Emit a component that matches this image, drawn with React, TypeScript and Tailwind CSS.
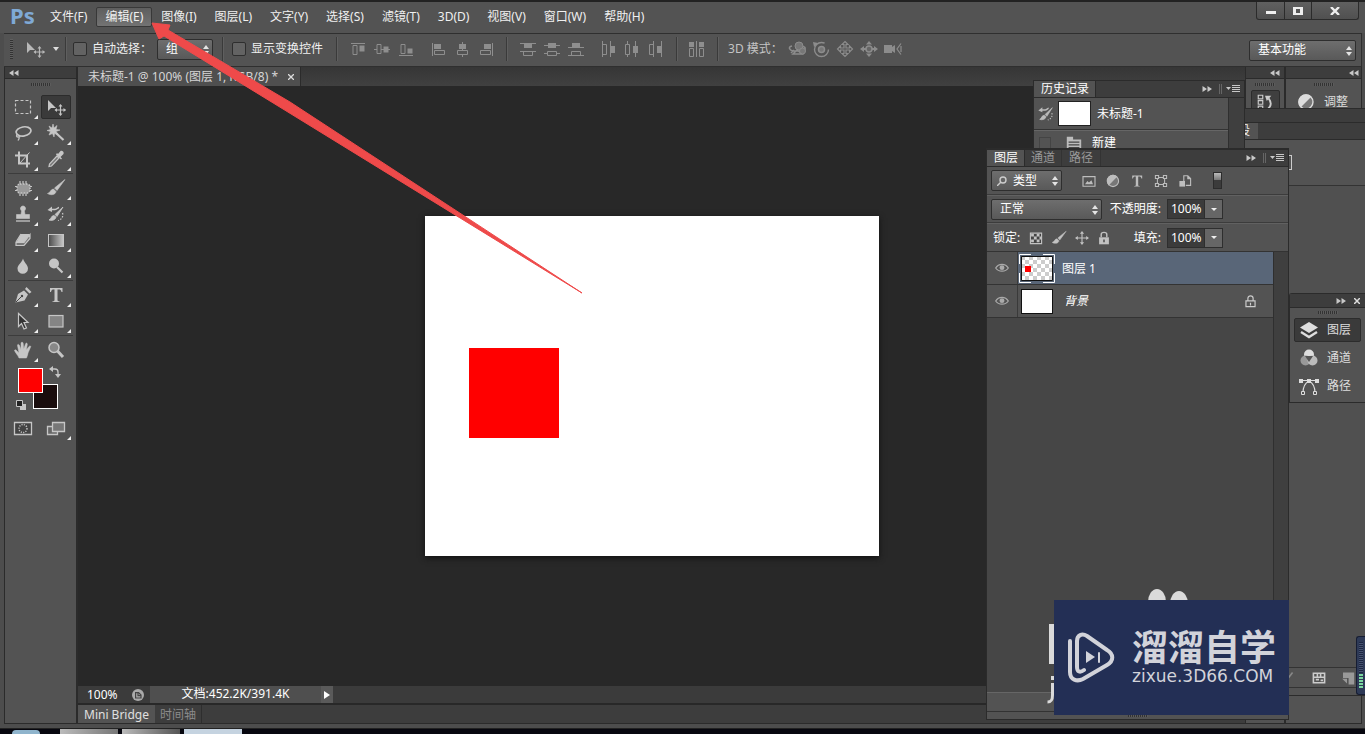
import type { ReactNode } from 'react';

const menus = [
  '文件(F)', '编辑(E)', '图像(I)', '图层(L)', '文字(Y)', '选择(S)',
  '滤镜(T)', '3D(D)', '视图(V)', '窗口(W)', '帮助(H)',
];

interface IconProps {
  children: ReactNode;
  className?: string;
}

// 20x20 grid, everything takes the text colour
function Icon({ children, className = 'w-5 h-5' }: IconProps) {
  return (
    <svg viewBox="0 0 20 20" className={`shrink-0 ${className}`} fill="none" stroke="currentColor" strokeWidth={1}>
      {children}
    </svg>
  );
}

const moveArrow = (
  <>
    <path d="M2 3v11l3-3h5z" fill="currentColor" stroke="none" />
    <path d="M14.5 8v10M9.5 13h10" strokeWidth={1.2} />
    <path d="M14.5 7l-2 2.5h4zM14.5 19l-2-2.5h4zM8.5 13l2.5-2v4zM20 13l-2.5-2v4z" fill="currentColor" stroke="none" />
  </>
);

const tools: Record<string, ReactNode> = {
  marquee: <rect x="2.5" y="3.500" width="15" height="13" strokeDasharray="3 2" strokeWidth={1.2} />,
  move: moveArrow,
  lasso: (
    <>
      <ellipse cx="10.5" cy="8.5" rx="7.5" ry="4.5" strokeWidth={1.7} transform="rotate(-10 10 8)" />
      <path d="M5 11c-2 1-2 3 0 3s1 2 0 3.500M5.500 12c2 1 2 2 0 2" strokeWidth={1.3} />
    </>
  ),
  wand: (
    <>
      <path d="M7 1l1 4 3-2.500-1 4 4 .5-4 1.500 2 3-3.500-1L8 14l-1.500-3.500L3 12l1.500-3.500L1 7.500l3.500-1L3 3l3 2z" fill="currentColor" strokeWidth={.6} />
      <path d="M10 10l7.500 7" strokeWidth={2.2} />
    </>
  ),
  crop: (
    <>
      <path d="M6 2.500v12h11M2 6.500h12v12" strokeWidth={2} />
      <path d="M7 14l9.500-10.500" />
    </>
  ),
  dropper: (
    <>
      <path d="M11 7l-7.500 8L3 17.500l2.500-.5L13 9z" fill="#777" strokeWidth={1.2} />
      <path d="M10 5.500l5 5 1-1-1.500-1.500 3-3c1-2-1.500-4-3-3l-2.500 3-1-1z" fill="currentColor" stroke="none" />
    </>
  ),
  patch: (
    <>
      <rect x="4" y="6" width="13" height="9" rx="3" fill="#999" stroke="none" />
      <rect x="4" y="6" width="13" height="9" rx="3" strokeDasharray="1.500 1.500" strokeWidth={1.5} />
      <path d="M7 3v3M10 3v3M13 3v3M7 15v3M10 15v3M13 15v3M2 8.500h2M2 12.500h2M17 8.500h2M17 12.500h2" strokeWidth={1.2} />
    </>
  ),
  brush: (
    <>
      <path d="M19 1.500L8.500 10l2.500 2.500z" fill="currentColor" strokeWidth={.6} />
      <path d="M7.500 11c-3 0-3 4-6 4.500 3 2 8 1.500 8.500-2z" fill="currentColor" strokeWidth={.6} />
    </>
  ),
  stamp: (
    <>
      <path d="M10 2a2.500 2.500 0 0 0-2.500 3c.5 1 1 1.500 1 2.500L8 10.500H3.500v4h13v-4H12l-.5-3c0-1 .5-1.500 1-2.500A2.500 2.500 0 0 0 10 2z" fill="currentColor" strokeWidth={.6} />
      <path d="M3 17h14" strokeWidth={1.3} />
    </>
  ),
  history: (
    <>
      <path d="M17 3L9 10.500l2 2zM8 11.500c-3 0-2.500 3.500-5 4.500 3 1 6.500 0 7-3z" fill="currentColor" strokeWidth={.8} />
      <path d="M4 5.500h5c2 0 3-2 4-2" strokeWidth={1.6} />
      <path d="M1.500 6L6 2.500V8z" fill="currentColor" stroke="none" />
      <path d="M16.500 9c1 4-1 6.500-4.500 7.500" strokeDasharray="1.500 1.500" strokeWidth={1.3} />
    </>
  ),
  eraser: (
    <>
      <path d="M8 4h9l-5 9H3z" fill="currentColor" stroke="none" />
      <path d="M3 12l5-8M3 12.500h8l6-8v4l-6 7H3z" fill="#777" strokeWidth={1.2} />
    </>
  ),
  gradient: (
    <>
      <defs>
        <linearGradient id="ramp"><stop stopColor="#4a4a4a" /><stop offset="1" stopColor="#c8c8c8" /></linearGradient>
      </defs>
      <rect x="2.500" y="4.500" width="15" height="12" fill="url(#ramp)" />
    </>
  ),
  blur: <path d="M10 2.500c1 4 5 6.500 5 10a5 5 0 0 1-10.500 0c0-3.500 4.500-6 5.500-10z" fill="currentColor" stroke="none" />,
  dodge: (
    <>
      <circle cx="8" cy="7.500" r="5" fill="currentColor" stroke="none" />
      <path d="M11 11l5.500 5.500" strokeWidth={2.2} />
    </>
  ),
  pen: (
    <>
      <path d="M2.500 17.500L5 9l6-3.500 4 4-3.500 6z" fill="currentColor" stroke="none" />
      <path d="M12 4l1.500-2 5 5-2 1.500z" fill="currentColor" stroke="none" />
      <path d="M3 17l5.500-5.500" stroke="#444" />
      <circle cx="9" cy="11" r="1.200" fill="#444" stroke="none" />
    </>
  ),
  type: <path d="M4 3h12.500v4h-1c-.5-2-1-2.500-3-2.500h-1V15c0 1 .5 1.200 2 1.300V17h-7v-.7c1.500-.1 2-.3 2-1.300V4.500H8C6 4.500 5.500 5 5 7H4z" fill="currentColor" stroke="none" />,
  select: <path d="M5.500 2.500v13l3-3 2.500 5.500 2.500-1L11 11.500h4z" fill="#333" strokeWidth={1.2} />,
  shape: <rect x="3" y="4.500" width="14" height="11.500" fill="#858585" strokeWidth={1.2} />,
  hand: <path d="M6 18C5 15 2 12.500 1.500 10.500c0-1 1.500-1 2.500.5l2 2L4.500 5.500C4.300 4 6 4 6.500 5.500L8 9.500 8 3.500c0-1.800 2-1.800 2.200 0l.5 5.500L12.500 4c.5-1.500 2-1 1.800.5l-1 5.500 2.700-3.500c1-1.200 2.200-.5 1.500.8L15 13c0 2-1 3-1.500 5z" fill="currentColor" strokeWidth={.5} />,
  zoom: (
    <>
      <circle cx="8" cy="7.500" r="5" fill="#888" strokeWidth={1.5} />
      <path d="M11.500 11l5.500 6" strokeWidth={3} />
    </>
  ),
};

const toolGroups = [
  [['marquee', 'move'], ['lasso', 'wand'], ['crop', 'dropper']],
  [['patch', 'brush'], ['stamp', 'history'], ['eraser', 'gradient'], ['blur', 'dodge']],
  [['pen', 'type'], ['select', 'shape']],
  [['hand', 'zoom']],
];

// align left/right and top/bottom, then the distribute sets
const alignSets = [
  [
    <><path d="M3 4.500h14" /><path d="M5 6.500h4v9H5z" /><path d="M11.500 6.500h5v6h-5z" fill="currentColor" stroke="none" /></>,
    <><path d="M2 10.500h3M9 10.500h9" /><path d="M5 5.500h4v9H5z" /><path d="M11.500 7.500h5v6h-5z" fill="currentColor" stroke="none" /></>,
    <><path d="M3 16.500h14" /><path d="M5 5.500h4v9H5z" /><path d="M11.500 9.500h5v5h-5z" fill="currentColor" stroke="none" /></>,
  ],
  [
    <><path d="M4.500 4v13" /><path d="M6.500 11.500h10v4h-10z" /><path d="M6 5h7v5H6z" fill="currentColor" stroke="none" /></>,
    <><path d="M10.500 3v8M10.500 16v2" /><path d="M5.500 11.500h10v4h-10z" /><path d="M7 5h7v5H7z" fill="currentColor" stroke="none" /></>,
    <><path d="M16.500 4v13" /><path d="M4.500 11.500h10v4h-10z" /><path d="M8 5h7v5H8z" fill="currentColor" stroke="none" /></>,
  ],
  [
    <><path d="M2 4.500h16M2 12.500h16M5.500 12.500v4h9v-4" /><path d="M6 5h8v4H6z" fill="currentColor" stroke="none" /></>,
    <><path d="M2 6.500h16M2 14.500h4M14 14.500h4M5.500 12.500h9v4h-9z" /><path d="M6 4h8v5H6z" fill="currentColor" stroke="none" /></>,
    <><path d="M2 8.500h16M2 16.500h16M5.500 16.500v-4h9v4" /><path d="M6 4h8v5H6z" fill="currentColor" stroke="none" /></>,
  ],
  [
    <><path d="M4.500 2v16M12.500 2v16M4.500 5.500h4v10h-4" /><path d="M13 7h4v7h-4z" fill="currentColor" stroke="none" /></>,
    <><path d="M5.500 2v3M5.500 15v3M13.500 2v16M3.500 5.500h4v10h-4z" /><path d="M11 7h5v7h-5z" fill="currentColor" stroke="none" /></>,
    <><path d="M7.500 2v16M15.500 2v16M7.500 5.500h-4v10h4" /><path d="M11 7h4v7h-4z" fill="currentColor" stroke="none" /></>,
  ],
];

const modes3d = [
  <><circle cx="12" cy="7" r="4" fill="#777" /><path d="M5 7c-4 1-3 4 1 5h9c4 0 4-4 1-4.500M4 14l3-3M6 15h9l-5-4z" strokeWidth={1.5} /><circle cx="15.500" cy="12" r="3" fill="#777" /></>,
  <><circle cx="10.500" cy="10.500" r="7" strokeWidth={1.4} strokeDasharray="36 8" /><circle cx="10.500" cy="10.500" r="3" fill="#777" strokeWidth={1.5} /><path d="M2 3l5 1-4 4z" fill="currentColor" stroke="none" /></>,
  <path d="M10 2.500l3 3h-2v3.500h3.500V7l3 3-3 3v-2H11v3.500h2l-3 3-3-3h2V11H5.500v2l-3-3 3-3v2H9V5.500H7z" strokeWidth={1.2} />,
  <><circle cx="10" cy="10" r="3" fill="#666" strokeWidth={1.5} /><path d="M10 2l3 3.500H7zM10 18l3-3.500H7zM1 10l4-3v2h2v2H5v2zM19 10l-4-3v2h-2v2h2v2z" fill="currentColor" stroke="none" /></>,
  <><path d="M1 6h8v2l3-2v8l-3-2v2H1z" fill="currentColor" stroke="none" /><path d="M18 4.500L14 10l4 5.500M18 7v6" strokeWidth={1.2} /></>,
];

const filterIcons = [
  { label: '像素图层', art: <><path d="M2.500 4.500h15v12h-15z" strokeWidth={1.4} /><path d="M5 14l3-4 2 2 3-3 2 5z" fill="currentColor" stroke="none" /></> },
  { label: '调整图层', art: <><circle cx="10" cy="10" r="7" fill="#777" strokeWidth={1.4} /><path d="M15.500 4.500A7.700 7.700 0 1 0 4.500 15.500z" fill="currentColor" stroke="none" /></> },
  { label: '文字图层', art: tools.type },
  { label: '形状图层', art: <><path d="M5.500 5.500h9v9h-9z" strokeWidth={1.3} /><path d="M3 3h4v4H3zM13 3h4v4h-4zM3 13h4v4H3zM13 13h4v4h-4z" fill="#535353" strokeWidth={1.3} /></> },
  { label: '智能对象', art: <><path d="M8.500 10V3.500h5l3.500 3.500v8.500h-6M13.500 3.500V7H17" strokeWidth={1.4} /><path d="M3 10h7v7H3z" fill="currentColor" stroke="none" /></> },
];

function Grip({ className = '' }: { className?: string }) {
  return (
    <div className={`h-[3px] w-5 shrink-0 bg-[repeating-linear-gradient(90deg,#333_0_1px,#5c5c5c_1px_2px)] ${className}`} />
  );
}

function Chevrons({ left }: { left?: boolean }) {
  return (
    <svg viewBox="0 0 10 6" className="w-[10px] h-[6px]" fill="#c8c8c8">
      {left ? <path d="M4.500 0v6L0 3zM9.500 0v6L5 3z" /> : <path d="M.5 0v6L5 3zM5.500 0v6L10 3z" />}
    </svg>
  );
}

function PanelControls() {
  return (
    <div className="ml-auto mr-1 flex items-center gap-1">
      <Chevrons />
      <span className="ml-[3px] h-[10px] w-[3px] border-x border-[#666]" />
      <svg viewBox="0 0 14 8" className="w-[14px] h-[8px]" stroke="#c8c8c8">
        <path d="M0 2h5L2.500 5z" fill="#c8c8c8" stroke="none" />
        <path d="M6 .5h8M6 2.500h8M6 4.500h8M6 6.500h8" />
      </svg>
    </div>
  );
}

function Divider() {
  return <div className="h-6 w-[2px] shrink-0 border-l border-[#3a3a3a] bg-[#5f5f5f]" />;
}

function Picker({ label, value, className, inset = 'pl-2' }: { label: string; value: string; className: string; inset?: string }) {
  return (
    <div className={`relative shrink-0 ${className}`}>
      <select aria-label={label} className={`block h-[21px] w-full appearance-none rounded-[2px] border border-[#2e2e2e] bg-linear-to-b from-[#6e6e6e] to-[#595959] text-xs leading-[18px] text-white ${inset}`}>
        <option>{value}</option>
      </select>
      <svg viewBox="0 0 6 10" className="pointer-events-none absolute right-1 top-[6px] h-[10px] w-[6px]" fill="#e4e4e4">
        <path d="M3 0l3 4H0zM3 10l3-4H0z" />
      </svg>
    </div>
  );
}

function Percent({ id, label }: { id: string; label: string }) {
  return (
    <>
      <label htmlFor={id} className="ml-auto">{label}</label>
      <div className="ml-[6px] flex h-[20px] w-[56px] border border-[#2e2e2e]">
        <input id={id} defaultValue="100%" className="w-[36px] bg-[#3b3b3b] pl-[3px] text-xs text-white" />
        <button aria-label={`${label}菜单`} className="flex flex-1 items-center justify-center border-l border-[#2e2e2e] bg-[#666]">
          <svg viewBox="0 0 6 3" className="h-[3px] w-[6px]" fill="#eee"><path d="M0 0h6L3 3z" /></svg>
        </button>
      </div>
    </>
  );
}

function Check({ label }: { label: string }) {
  return (
    <label className="flex shrink-0 items-center gap-[5px]">
      <input type="checkbox" className="h-[14px] w-[14px] appearance-none rounded-[2px] border border-[#2e2e2e] bg-[#636363]" />
      {label}
    </label>
  );
}

function MenuBar() {
  return (
    <header className="flex h-[33px] shrink-0 items-start border-t-2 border-[#222] bg-[#535353]">
      <div className="w-[41px] shrink-0 pl-[10px] text-[22px] font-bold leading-[26px] text-[#7fa9d6]">Ps</div>
      <nav className="flex pt-[5px]">
        {menus.map((m, i) => (
          <button
            key={m}
            className={`h-[20px] whitespace-nowrap rounded-[2px] border px-2 leading-[18px] ${i === 1 ? 'border-[#383838] bg-linear-to-b from-[#5e5e5e] to-[#737373]' : 'border-transparent'}`}
          >
            {m}
          </button>
        ))}
      </nav>
      <div className="ml-auto mr-[6px] flex h-[18px] rounded-b-[3px] border border-t-0 border-[#2b2b2b] bg-linear-to-b from-[#606060] to-[#505050]">
        <button aria-label="最小化" className="flex w-[28px] items-end justify-center border-r border-[#2b2b2b] pb-[5px]">
          <span className="h-[3px] w-[10px] bg-[#eee]" />
        </button>
        <button aria-label="最大化" className="flex w-[27px] items-center justify-center border-r border-[#2b2b2b]">
          <span className="h-2 w-[10px] border-2 border-x-[3px] border-[#eee]" />
        </button>
        <button aria-label="关闭" className="flex w-[46px] items-center justify-center">
          <svg viewBox="0 0 10 8" className="h-2 w-[10px]" stroke="#eee" strokeWidth={2.4}><path d="M1 0l8 8M9 0L1 8" /></svg>
        </button>
      </div>
    </header>
  );
}

function OptionsBar() {
  return (
    <div className="ml-1 mr-[3px] flex h-[34px] shrink-0 items-center border-y border-r border-[#2f2f2f] bg-[#535353] pb-[2px]">
      <div className="ml-[6px] h-5 w-[3px] bg-[repeating-linear-gradient(0deg,#333_0_1px,#606060_1px_2px)]" />
      <button aria-label="移动工具" className="ml-3 flex items-center gap-2 text-[#b8b8b8]">
        <Icon className="w-5 h-5">{moveArrow}</Icon>
        <svg viewBox="0 0 6 4" className="h-1 w-[6px]" fill="#ddd"><path d="M0 0h6L3 4z" /></svg>
      </button>
      <div className="mx-[6px]"><Divider /></div>
      <Check label="自动选择：" />
      <Picker label="自动选择" value="组" className="ml-[5px] w-[56px]" />
      <div className="ml-[9px] mr-2"><Divider /></div>
      <Check label="显示变换控件" />
      <div className="ml-[13px] mr-2"><Divider /></div>
      <div className="flex items-center gap-2 text-[#8e8e8e]">
        {alignSets.map((set, i) => (
          <div key={i} className="flex items-center">
            {set.map((art, j) => (
              <button key={j} aria-label={`对齐 ${i * 3 + j + 1}`} className="flex w-6 justify-center"><Icon>{art}</Icon></button>
            ))}
            {i === 1 && <div className="ml-2"><Divider /></div>}
          </div>
        ))}
      </div>
      <div className="mx-2"><Divider /></div>
      <button aria-label="自动对齐图层" className="text-[#8e8e8e]">
        <Icon>
          <path d="M3 3h5v5H3zM13 3h5v5h-5z" fill="currentColor" stroke="none" />
          <path d="M3.500 9.500h4v8h-4zM13.500 9.500h4v8h-4zM10.500 2v16" />
        </Icon>
      </button>
      <div className="ml-[11px] mr-[9px]"><Divider /></div>
      <span className="whitespace-nowrap text-[#c4c4c4]">3D 模式：</span>
      <div className="ml-1 flex gap-1 text-[#8c8c8c]">
        {modes3d.map((art, i) => (
          <button key={i} aria-label={`3D 模式 ${i + 1}`}><Icon>{art}</Icon></button>
        ))}
      </div>
      <Picker label="工作区" value="基本功能" className="ml-auto mr-[5px] mt-[2px] w-[107px]" />
    </div>
  );
}

function Toolbox() {
  return (
    <aside className="flex w-[74px] shrink-0 flex-col border-x border-[#2b2b2b] border-r-2 bg-[#535353] text-[#c6c6c6]">
      <div className="flex h-3 shrink-0 items-center border-b border-[#2b2b2b] bg-[#3d3d3d] pl-1"><Chevrons left /></div>
      <Grip className="mx-auto mt-1 mb-[7px]" />
      {toolGroups.map((rows, i) => (
        <div key={i} className={`mx-[3px] ${i ? 'mt-[2px] border-t border-[#3c3c3c]' : ''}`}>
          {rows.map((row) => (
            <div key={row[0]} className="flex h-[26px] items-end gap-[3px]">
              {row.map((name) => (
                <button
                  key={name}
                  aria-label={name}
                  className={`relative flex h-6 w-[30px] items-center justify-center ${name === 'move' ? 'rounded-[2px] border border-[#2c2c2c] bg-[#3a3a3a]' : ''}`}
                >
                  <Icon>{tools[name]}</Icon>
                  {name !== 'move' && name !== 'zoom' && (
                    <svg viewBox="0 0 4 4" className="absolute bottom-0 right-0 h-1 w-1" fill="#eee"><path d="M4 0v4H0z" /></svg>
                  )}
                </button>
              ))}
            </div>
          ))}
        </div>
      ))}
      <div className="relative ml-[13px] mt-[6px] h-12 w-12">
        <button aria-label="背景色" className="absolute left-[15px] top-[16px] h-[25px] w-[25px] border border-white bg-[#1a0d0d]" />
        <button aria-label="前景色" className="absolute left-0 top-0 h-[25px] w-[25px] border border-white bg-[#ff0000]" />
        <svg viewBox="0 0 12 12" className="absolute left-[31px] top-[-2px] h-3 w-3" fill="none" stroke="currentColor" strokeWidth={1.3}>
          <path d="M3 3h3c2 0 3 1 3 3v3" /><path d="M4 0v6L0 3zM6 8h6l-3 4z" fill="currentColor" stroke="none" />
        </svg>
        <svg viewBox="0 0 10 10" className="absolute left-[-2px] top-[32px] h-[10px] w-[10px]">
          <path d="M4 4h6v6H4z" fill="#c6c6c6" /><path d="M.5.5h6v6h-6z" fill="#222" stroke="#c6c6c6" />
        </svg>
      </div>
      <div className="mx-[3px] flex h-6 items-center gap-[3px]">
        <button aria-label="快速蒙版" className="flex w-[30px] justify-center">
          <Icon><path d="M1.500 4.500h17v12h-17z" fill="#444" strokeWidth={1.3} /><circle cx="10" cy="10.500" r="4" strokeDasharray="1.200 1.200" strokeWidth={1.4} /></Icon>
        </button>
        <button aria-label="屏幕模式" className="relative flex w-[30px] justify-center">
          <Icon><path d="M1.500 8.500h10v8h-10z" fill="#666" strokeWidth={1.3} /><path d="M6.500 4.500h12v9h-12z" fill="#777" strokeWidth={1.3} /></Icon>
          <svg viewBox="0 0 4 4" className="absolute bottom-[-2px] right-0 h-1 w-1" fill="#eee"><path d="M4 0v4H0z" /></svg>
        </button>
      </div>
    </aside>
  );
}

function Document() {
  return (
    <main className="flex min-w-0 flex-1 flex-col bg-[#282828]">
      <div className="flex h-[19px] shrink-0 bg-linear-to-b from-[#363636] to-[#404040]">
        <div className="flex items-center gap-[10px] border-r border-[#2b2b2b] bg-[#4f4f4f] pl-[10px] pr-[6px] text-[#d6d6d6]">
          <span>未标题-1 @ 100% (图层 1, RGB/8) *</span>
          <button aria-label="关闭文档">
            <svg viewBox="0 0 6 6" className="h-[6px] w-[6px]" stroke="#ddd" strokeWidth={1.3}><path d="M0 0l6 6M6 0L0 6" /></svg>
          </button>
        </div>
      </div>
      <div className="flex flex-1 items-center justify-center pr-[20px]">
        <div className="h-[340px] w-[454px] bg-white shadow-[0_2px_6px_#111]">
          <div className="ml-11 mt-[132px] h-[90px] w-[90px] bg-[#ff0000]" />
        </div>
      </div>
      <div className="flex h-[17px] shrink-0 items-center bg-[#3b3b3b] text-white">
        <span className="w-12 pl-[9px]">100%</span>
        <div className="flex w-6 justify-center">
          <Icon className="w-3 h-3">
            <circle cx="10" cy="10" r="10" fill="#aaa" stroke="none" />
            <path d="M6 15V6h5l4 4v5z" stroke="#444" strokeWidth={2} /><path d="M10 5v6h5" stroke="#444" strokeWidth={2} />
          </Icon>
        </div>
        <span className="h-full w-[171px] bg-[#4f4f4f] text-center leading-4">文档:452.2K/391.4K</span>
        <button aria-label="状态菜单" className="flex h-full w-3 items-center justify-center bg-[#5a5a5a]">
          <svg viewBox="0 0 6 8" className="h-2 w-[6px]" fill="#fff"><path d="M0 0v8l6-4z" /></svg>
        </button>
      </div>
      <div className="mt-[2px] flex h-[18px] shrink-0 bg-[#3d3d3d] leading-[17px]">
        <button className="bg-[#535353] px-[6px] text-[#e0e0e0]">Mini Bridge</button>
        <button className="border-r border-[#2e2e2e] px-[5px] text-[#8c8c8c]">时间轴</button>
      </div>
    </main>
  );
}

function RightDock() {
  return (
    <aside className="flex w-[117px] shrink-0 border-x border-[#2b2b2b]">
      <div className="flex w-[40px] flex-col border-r-2 border-[#2b2b2b] bg-[#535353]">
        <div className="flex h-3 items-center justify-end border-b border-[#2b2b2b] bg-[#3d3d3d] pr-1"><Chevrons left /></div>
        <Grip className="mx-auto mt-1" />
        <button aria-label="历史记录" className="mx-auto mt-1 flex h-6 w-[29px] items-center justify-center rounded-[2px] border border-[#2c2c2c] bg-[#3f3f3f] text-[#ccc]">
          <Icon className="w-[18px] h-[18px]">
            <path d="M2.500 2.500h5v4h-5zM2.500 8.500h5v4h-5zM2.500 14.500h5v3h-5z" strokeWidth={1.3} />
            <path d="M13 18c5-4 4-8 1-12" strokeWidth={2} /><path d="M10 3h7l-5 6z" fill="currentColor" stroke="none" />
          </Icon>
        </button>
      </div>
      <div className="flex flex-1 flex-col bg-[#535353]">
        <div className="flex h-3 items-center justify-end border-b border-[#2b2b2b] bg-[#3d3d3d] pr-[2px]"><Chevrons left /></div>
        <Grip className="mx-auto mt-1" />
        <button className="ml-[10px] mt-[6px] flex items-center gap-2 text-[#ddd]">
          <Icon>{filterIcons[1].art}</Icon>
          调整
        </button>
      </div>
    </aside>
  );
}

function AdjustWindow() {
  return (
    <section className="absolute right-0 top-[108px] flex h-[588px] w-[121px] flex-col border-y border-l border-[#2b2b2b] bg-[#535353]">
      <div className="h-[13px] bg-[#3d3d3d]" />
      <div className="flex h-[18px] border-y border-[#2b2b2b] bg-[#3d3d3d]">
        <div className="flex w-[13px] justify-end overflow-hidden bg-[#535353] pr-2 leading-4">设</div>
      </div>
      <div className="flex h-[46px] items-center border-b border-[#333] pl-11">
        <span className="h-[15px] w-[3px] border border-l-0 border-[#ccc]" />
      </div>
      <div className="flex-1 bg-[#505050]" />
      <div className="flex h-[21px] items-center justify-end gap-3 border-y border-[#333] pr-[10px] text-[#ccc]">
        <Icon className="w-4 h-4"><path d="M2 16L12 3" stroke="#888" strokeWidth={2} /></Icon>
        <Icon className="w-4 h-4"><path d="M3 4h14v12H3zM3 9h14M8 4v5M12 4v5M6 12h4M12 13h3" strokeWidth={2} /></Icon>
        <Icon className="w-4 h-4"><path d="M5 3h14v15h-7v-8H5z" fill="#999" stroke="none" /><path d="M4 11h6v6z" fill="#999" stroke="none" /></Icon>
      </div>
      <div className="h-[7px]" />
    </section>
  );
}

function DockedPanels() {
  const items = [
    { name: '图层', art: <><path d="M10 2l9 5.500-9 5.500-9-5.500z" fill="currentColor" stroke="none" /><path d="M2 12l8 5 8-5" strokeWidth={2.4} /></> },
    { name: '通道', art: <><circle cx="10" cy="6.500" r="5" fill="#ddd" stroke="none" /><circle cx="6.500" cy="12.500" r="5" fill="#999" stroke="none" /><circle cx="13.500" cy="12.500" r="5" fill="#bbb" stroke="none" /><path d="M6 8h8l-4 6z" fill="#555" stroke="none" /></> },
    { name: '路径', art: <><path d="M1 4.500h18M4 17c0-7 2-10 6-12 4 2 6 5 6 12" strokeWidth={1.2} /><path d="M0 3h4v4H0zM8 3h4v4H8zM16 3h4v4h-4z" fill="currentColor" stroke="none" /><path d="M2.500 15.500h3v3h-3zM14.500 15.500h3v3h-3z" fill="#535353" /></> },
  ];
  return (
    <section className="absolute right-0 top-[293px] w-[76px] rounded-tl-[3px] border border-r-0 border-[#2b2b2b] bg-[#535353] pb-1">
      <div className="flex h-[14px] items-center justify-end gap-2 border-b border-[#2b2b2b] bg-[#3d3d3d] pr-[5px]">
        <Chevrons />
        <svg viewBox="0 0 6 6" className="h-[6px] w-[6px]" stroke="#ddd" strokeWidth={1.5}><path d="M0 0l6 6M6 0L0 6" /></svg>
      </div>
      <Grip className="mx-auto mt-[3px] mb-1" />
      <div className="flex flex-col gap-1 px-1">
        {items.map((it, i) => (
          <button key={it.name} className={`flex h-6 items-center gap-2 rounded-[2px] border pl-1 text-[#ddd] ${i ? 'border-transparent' : 'border-[#2c2c2c] bg-[#3a3a3a]'}`}>
            <Icon>{it.art}</Icon>
            {it.name}
          </button>
        ))}
      </div>
    </section>
  );
}

function HistoryWindow() {
  return (
    <section className="absolute right-[120px] top-[80px] w-[212px] border border-[#2b2b2b] bg-[#535353] text-white">
      <div className="flex h-[17px] items-center border-b border-[#2b2b2b] bg-[#3d3d3d]">
        <span className="h-full border-r border-[#2b2b2b] bg-[#535353] px-[6px] pl-[7px] leading-4">历史记录</span>
        <PanelControls />
      </div>
      <div className="flex h-[58px]">
        <div className="flex-1">
          <div className="flex h-[32px] items-center gap-[3px] border-b border-[#333] pl-[3px]">
            <Icon className="w-[18px] h-[18px]"><g className="text-[#bbb]">{tools.history}</g></Icon>
            <div className="h-[25px] w-[33px] border border-[#222] bg-white" />
            <span className="ml-[3px]">未标题-1</span>
          </div>
          <div className="flex h-6 items-center border-t border-[#666] pl-[5px]">
            <span className="h-3 w-3 border border-[#444]" />
            <Icon className="ml-[14px] w-[18px] h-[18px]"><path d="M2 3h7v3h9v12H2z" fill="#bbb" stroke="none" /><path d="M4 9h12M4 12h12M4 15h12" stroke="#444" strokeWidth={1.3} /></Icon>
            <span className="ml-[9px]">新建</span>
          </div>
        </div>
        <div className="w-4 border-l border-[#2f2f2f] bg-[#3f3f3f]" />
      </div>
    </section>
  );
}

function Eye() {
  return (
    <Icon className="w-[14px] h-[14px]">
      <path d="M1 10c4-7 14-7 18 0-4 6-14 6-18 0z" stroke="#aaa" strokeWidth={1.8} />
      <circle cx="10" cy="9.500" r="3.500" fill="#aaa" stroke="none" />
    </Icon>
  );
}

function LayersWindow() {
  return (
    <section className="absolute right-[76px] top-[148px] flex h-[572px] w-[303px] flex-col border border-t-2 border-[#2b2b2b] bg-[#535353] text-white">
      <div className="flex h-[17px] shrink-0 items-center border-b border-[#2b2b2b] bg-[#3d3d3d] leading-4">
        <button className="h-full border-r border-[#2b2b2b] bg-[#535353] px-[6px] pl-[7px]">图层</button>
        <button className="h-full border-r border-[#333] px-[6px] text-[#999]">通道</button>
        <button className="h-full border-r border-[#333] px-[7px] text-[#999]">路径</button>
        <PanelControls />
      </div>

      <div className="flex h-[28px] shrink-0 items-center border-b border-[#3c3c3c] px-1 text-[#bdbdbd]">
        <div className="relative">
          <Picker label="滤镜类型" value="类型" className="w-[71px]" inset="pl-[21px]" />
          <svg viewBox="0 0 10 10" className="pointer-events-none absolute left-[6px] top-[6px] h-[10px] w-[10px]" fill="none" stroke="#ccc" strokeWidth={1.4}>
            <circle cx="6" cy="4" r="3" /><path d="M4 6L0 10" />
          </svg>
        </div>
        <div className="ml-[19px] flex gap-2">
          {filterIcons.map((f) => (
            <button key={f.label} aria-label={f.label}><Icon className="w-4 h-4">{f.art}</Icon></button>
          ))}
        </div>
        <button aria-label="滤镜开关" className="ml-5 h-[17px] w-[9px] border border-[#2c2c2c] bg-[#3b3b3b]">
          <span className="-mt-2 block h-[7px] bg-linear-to-b from-[#bbb] to-[#777]" />
        </button>
      </div>

      <div className="flex h-[28px] shrink-0 items-center border-b border-[#3c3c3c] border-t border-t-[#616161] pl-1 pr-[65px]">
        <Picker label="混合模式" value="正常" className="w-[111px]" />
        <Percent id="opacity" label="不透明度:" />
      </div>

      <div className="flex h-[29px] shrink-0 items-center border-b border-[#333] border-t border-t-[#616161] pl-[6px] pr-[65px]">
        <span>锁定:</span>
        <div className="ml-[9px] flex items-center gap-2 text-[#c2c2c2]">
          <button aria-label="锁定透明像素"><Icon className="w-[14px] h-[14px]"><path d="M2 3h16v15H2z" fill="#444" strokeWidth={1.6} /><path d="M3 4h4v4H3zM11 4h4v4h-4zM7 8h4v4H7zM15 8h3v4h-3zM3 12h4v4H3zM11 12h4v4h-4z" fill="currentColor" stroke="none" /></Icon></button>
          <button aria-label="锁定图像像素"><Icon className="w-4 h-4">{tools.brush}</Icon></button>
          <button aria-label="锁定位置"><Icon className="w-[14px] h-[14px]"><path d="M10 2v16M2 10h16" strokeWidth={1.6} /><path d="M10 0L7 4h6zM10 20l-3-4h6zM0 10l4-3v6zM20 10l-4-3v6z" fill="currentColor" stroke="none" /></Icon></button>
          <button aria-label="锁定全部"><Icon className="w-[14px] h-[14px]"><path d="M3 9h14v10H3z" fill="currentColor" stroke="none" /><path d="M6 9V5c0-4 8-4 8 0v4" strokeWidth={2} /><path d="M10 12v4" stroke="#444" strokeWidth={2} /></Icon></button>
        </div>
        <Percent id="fill" label="填充:" />
      </div>

      <div className="flex min-h-0 flex-1">
        <div className="flex-1 bg-[#464646]">
          <div className="flex h-[33px] border-b border-[#333] bg-[#535353]">
            <button aria-label="显示图层 1" className="flex w-[31px] items-center justify-center border-r border-[#3a3a3a]"><Eye /></button>
            <div className="flex flex-1 items-center bg-[#596678] pl-[1px]">
              <div className="relative p-[2px]">
                <svg viewBox="0 0 32 25" className="h-[25px] w-8">
                  <defs>
                    <pattern id="checker" width="8" height="8" patternUnits="userSpaceOnUse">
                      <path d="M0 0h8v8H0z" fill="#fff" /><path d="M0 0h4v4H0zM4 4h4v4H4z" fill="#ccc" />
                    </pattern>
                  </defs>
                  <path d="M.5.5h31v24H.5z" fill="url(#checker)" stroke="#111" />
                  <path d="M4 10h6v6H4z" fill="#f00" />
                </svg>
                <svg viewBox="0 0 36 29" className="absolute inset-0 h-[29px] w-9" fill="none" stroke="#fff">
                  <path d="M.5 10V.5H12M24 .5h11.500V10M35.500 19v9.500H24M12 28.500H.5V19" />
                </svg>
              </div>
              <span className="ml-[7px] pt-[2px]">图层 1</span>
            </div>
          </div>
          <div className="flex h-[33px] border-b border-[#333] bg-[#535353]">
            <button aria-label="显示背景" className="flex w-[31px] items-center justify-center border-r border-[#3a3a3a]"><Eye /></button>
            <div className="flex flex-1 items-center pl-[3px] pr-4">
              <div className="h-[25px] w-8 border border-[#111] bg-white" />
              <span className="ml-[11px] italic">背景</span>
              <Icon className="ml-auto w-[13px] h-[13px]"><path d="M3 9h14v9H3zM6 9V5c0-5 8-5 8 0v4M10 12v4" stroke="#ccc" strokeWidth={1.8} /></Icon>
            </div>
          </div>
        </div>
        <div className="w-[15px] border-l border-[#2f2f2f] bg-[#3f3f3f]" />
      </div>

      <div className="h-[19px] shrink-0 border-t border-[#666]" />
      <div className="flex h-2 shrink-0 items-center justify-center border-t border-[#333]"><Grip /></div>
    </section>
  );
}

function Watermark() {
  return (
    <div className="absolute right-[76px] top-[588px] w-[242px]">
      {/* mark that sticks out from behind the plate */}
      <svg viewBox="0 0 242 127" className="absolute inset-0 h-[127px] w-[242px]" fill="#dadada">
        <ellipse cx="110" cy="14" rx="9" ry="13" /><ellipse cx="132" cy="16" rx="9" ry="13" />
        <path d="M2 36h8v40H2zM4 88h3v4H4z" />
        <path d="M5.500 95v12c0 5-1 7-5 7" fill="none" stroke="#dadada" strokeWidth={3} />
      </svg>
      <div className="relative ml-[7px] mt-3 flex h-[115px] items-center bg-[#232f55] pl-3 text-[#d2d3da]">
        <svg viewBox="0 0 50 52" className="h-[52px] w-[50px] shrink-0" fill="none" stroke="currentColor" strokeWidth={4} strokeLinecap="round">
          <path d="M4 9v31c0 8 7 10 13 7l24-14c7-4 7-11 0-15L21 4c-5-3-10-1-10 5v26c0 5 3 6 7 3" />
          <path d="M20 19v12l9-6z" fill="currentColor" stroke="none" />
          <path d="M33 21v9" strokeWidth={2} />
        </svg>
        <div className="ml-4 pb-1">
          <div className="text-[36px] font-bold leading-10">溜溜自学</div>
          <div className="font-['DejaVu_Sans'] text-[17px] leading-4">zixue.3D66.COM</div>
        </div>
      </div>
    </div>
  );
}

export default function App() {
  return (
    <div className="relative flex h-screen flex-col overflow-hidden bg-[#4d4d4d] font-['Noto_Sans','Noto_Sans_CJK_SC',sans-serif] text-xs text-[#f0f0f0]">
      <MenuBar />
      <OptionsBar />
      <div className="mb-1 ml-1 mr-[3px] flex min-h-0 flex-1 border-b border-[#2b2b2b]">
        <Toolbox />
        <Document />
        <RightDock />
      </div>
      <footer className="flex h-[6px] shrink-0 items-end gap-1 overflow-hidden border-t border-[#222] bg-[#07070f] pl-3">
        <div className="h-1 w-7 rounded-t-full bg-[#8fb4cc]" />
        <div className="ml-4 h-[5px] w-[58px] bg-linear-to-r from-[#bbb] to-[#777]" />
        <div className="h-[5px] w-[58px] bg-linear-to-r from-[#bbb] to-[#555]" />
        <div className="h-[5px] w-[58px] bg-[#c5d3e0]" />
      </footer>

      <AdjustWindow />
      <DockedPanels />
      <HistoryWindow />
      <LayersWindow />
      <Watermark />

      {/* volume meter on the screen edge */}
      <div className="absolute right-0 top-[636px] h-[59px] w-[9px] rounded-l-[3px] border border-r-0 border-[#161d33] bg-[#2e3a57] px-[2px] py-[5px]">
        <div className="h-[31px] bg-[repeating-linear-gradient(0deg,#1d2742_0_1px,#465270_1px_2px)]" />
        <div className="h-4 bg-[repeating-linear-gradient(0deg,#2e3a57_0_1px,#7ad6a0_1px_3px)]" />
      </div>

      <svg viewBox="0 0 440 280" className="pointer-events-none absolute left-[150px] top-[20px] h-[280px] w-[440px]" fill="#ee4a4a" stroke="#ee4a4a" strokeLinejoin="round">
        <path d="M2 3l18 2-2 5 122 72 292 191L133 89 14 16l-5 3z" />
      </svg>
    </div>
  );
}
